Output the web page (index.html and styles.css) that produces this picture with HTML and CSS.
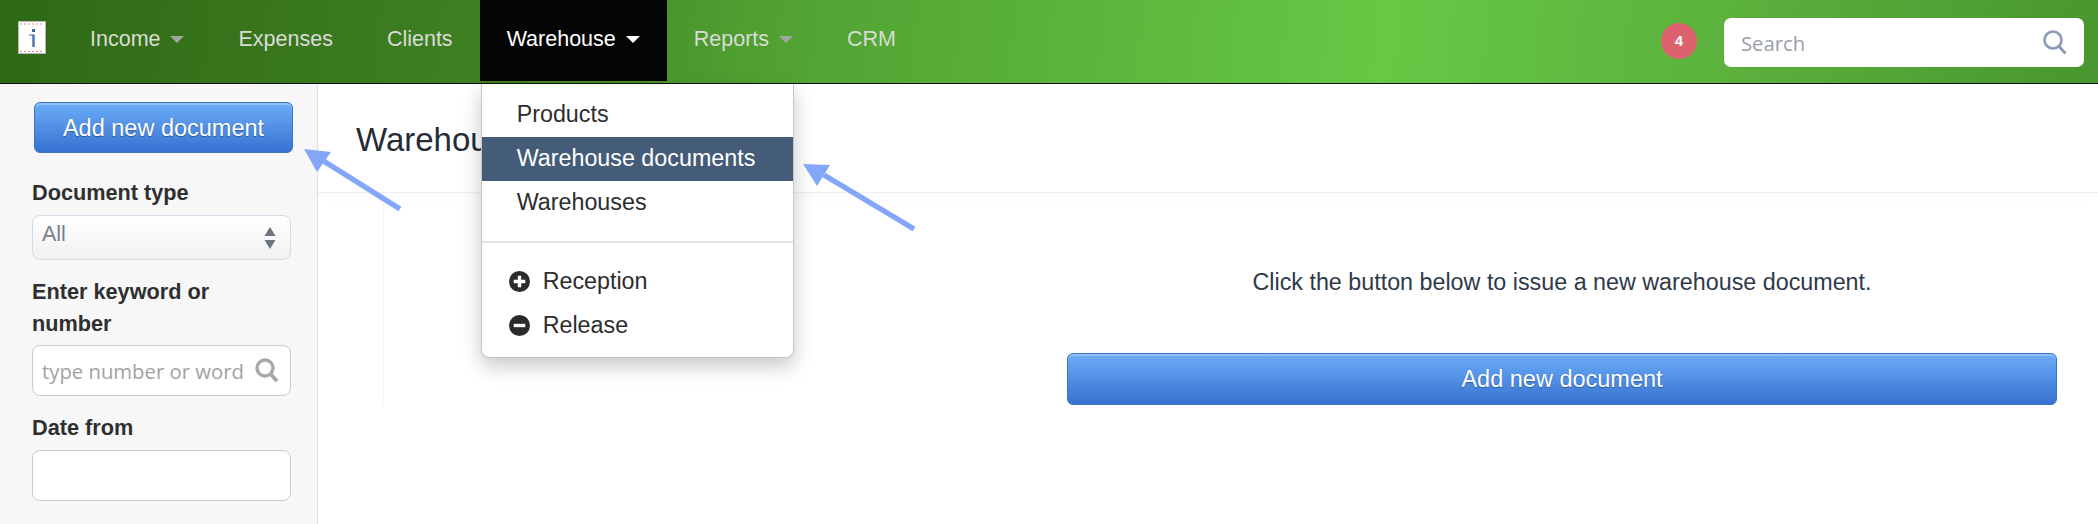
FILE: index.html
```html
<!DOCTYPE html>
<html lang="en">
<head>
    <meta charset="UTF-8">
    <title>Warehouse documents</title>
    <link rel="stylesheet" href="styles.css">
</head>
<body>
    <nav class="topbar">
        <a class="logo" href="#">
            <svg width="28" height="33" viewBox="0 0 28 33">
                <rect x="0.5" y="0.5" width="27" height="32" fill="#fff" stroke="#b9b9b9"/>
                <path d="M2 3H26M2 30.500H26" stroke="#d98a94" stroke-width="1.200" stroke-dasharray="2 2"/>
                <path d="M11 14H15.500" stroke="#7d9cc6" stroke-width="1.500"/>
                <path d="M15.500 13.500V26" stroke="#4f78ae" stroke-width="2.500"/>
                <rect x="14" y="8" width="3" height="3" fill="#3f6ca8"/>
            </svg>
        </a>
        <ul class="menu">
            <li class="menu-item"><a href="#">Income <span class="caret"></span></a></li>
            <li class="menu-item"><a href="#">Expenses</a></li>
            <li class="menu-item"><a href="#">Clients</a></li>
            <li class="menu-item open">
                <a href="#">Warehouse <span class="caret"></span></a>
                <div class="dropdown">
                    <a class="drop-link" href="#">Products</a>
                    <a class="drop-link active" href="#">Warehouse documents</a>
                    <a class="drop-link" href="#">Warehouses</a>
                    <div class="divider"></div>
                    <a class="drop-link with-icon" href="#">
                        <svg width="21" height="21" viewBox="0 0 20 20"><circle cx="10" cy="10" r="10" fill="#2b2b2b"/><path d="M10 4.500V15.500M4.500 10H15.500" stroke="#fff" stroke-width="3.200"/></svg>
                        Reception
                    </a>
                    <a class="drop-link with-icon" href="#">
                        <svg width="21" height="21" viewBox="0 0 20 20"><circle cx="10" cy="10" r="10" fill="#2b2b2b"/><path d="M4.500 10H15.500" stroke="#fff" stroke-width="3.200"/></svg>
                        Release
                    </a>
                </div>
            </li>
            <li class="menu-item"><a href="#">Reports <span class="caret"></span></a></li>
            <li class="menu-item"><a href="#">CRM</a></li>
        </ul>
        <span class="badge">4</span>
        <div class="top-search">
            <input type="text" placeholder="Search">
            <svg width="24" height="25" viewBox="0 0 24 25"><circle cx="10" cy="10" r="8.500" fill="none" stroke="#8a9ab8" stroke-width="2.600"/><path d="M16 16.500L22.500 23.500" stroke="#8a9ab8" stroke-width="2.800"/></svg>
        </div>
    </nav>

    <div class="layout">
        <aside class="sidebar">
            <a class="btn btn-side" href="#">Add new document</a>

            <label class="field-label first">Document type</label>
            <div class="fake-select">
                <span>All</span>
                <svg width="12" height="24" viewBox="0 0 12 24"><path d="M6 1L11.500 10H0.500ZM6 23L0.500 14H11.500Z" fill="#6d7480"/></svg>
            </div>

            <label class="field-label">Enter keyword or number</label>
            <div class="side-input">
                <input type="text" placeholder="type number or word">
                <svg width="24" height="25" viewBox="0 0 24 25"><circle cx="10" cy="10" r="8" fill="none" stroke="#a8a8a8" stroke-width="3.400"/><path d="M15.500 16L22 23" stroke="#a8a8a8" stroke-width="3.800"/></svg>
            </div>

            <label class="field-label date">Date from</label>
            <div class="side-input"><input type="text"></div>
        </aside>

        <main class="content">
            <header class="page-head">
                <h1>Warehouse documents</h1>
            </header>
            <section class="empty-pane">
                <p>Click the button below to issue a new warehouse document.</p>
                <a class="btn btn-wide" href="#">Add new document</a>
            </section>
        </main>
    </div>

    <!-- frecce sopra lo screenshot -->
    <svg class="arrows" width="2098" height="524" viewBox="0 0 2098 524">
        <path d="M400 209L322 160" stroke="#84a6f8" stroke-width="5.500"/>
        <path d="M304 149L331 152L317 172Z" fill="#84a6f8"/>
        <path d="M914 229L824 175" stroke="#84a6f8" stroke-width="5.500"/>
        <path d="M803 164L830 165L817 186Z" fill="#84a6f8"/>
    </svg>
</body>
</html>
```

FILE: styles.css
```css
body {
    margin: 0;
    height: 100vh;
    overflow: hidden;
    position: relative;
    font-family: "Liberation Sans", Arial, sans-serif;
    font-size: 23.300px;
    color: #2e3a4a;
    background-color: #fff;
}

a {
    text-decoration: none;
}

/* Barra in alto */
.topbar {
    display: flex;
    align-items: flex-start;
    height: 83px;
    border-bottom: 1px solid #111;
    background: linear-gradient(97deg, #2f6814 0%, #3f8023 23%, #50a031 36%, #66c845 66%, #5bb23c 82%, #48962f 100%);
}

.logo {
    display: block;
    margin: 21px 0 0 18px;
    height: 33px;
}

.menu {
    display: flex;
    list-style: none;
    margin: 0 0 0 17px;
    padding: 0;
    font-size: 21.500px;
}

.menu-item {
    position: relative;
    height: 81px;
}

.menu-item > a {
    display: block;
    padding: 27px 27px 0;
    height: 54px;
    color: #d9dcd6;
}

.menu-item.open {
    background-color: #050505;
}

.menu-item.open > a {
    color: #fff;
}

.caret {
    display: inline-block;
    width: 0;
    height: 0;
    margin-left: 4px;
    vertical-align: 3px;
    border-left: 7px solid transparent;
    border-right: 7px solid transparent;
    border-top: 7px solid #a3a69f;
}

.open .caret {
    border-top-color: #fff;
}

.dropdown {
    position: absolute;
    top: 84px;
    left: 1px;
    z-index: 10;
    width: 313px;
    height: 274px;
    box-sizing: border-box;
    padding-top: 9px;
    background-color: #fff;
    border-radius: 0 0 8px 8px;
    border: 1px solid #c6c6c6;
    border-top: none;
    box-shadow: 0 8px 20px rgba(0, 0, 0, 0.22);
    font-size: 23.300px;
}

.drop-link {
    display: block;
    height: 44px;
    line-height: 43px;
    padding-left: 35px;
    color: #2d2d2d;
}

.drop-link.active {
    background-color: #445c78;
    color: #fff;
}

.divider {
    height: 2px;
    margin: 16px 0;
    background-color: #e4e4e4;
}

.with-icon {
    display: flex;
    align-items: center;
    gap: 13px;
    padding-left: 27px;
}

.badge {
    width: 36px;
    height: 36px;
    margin: 23px 27px 0 auto;
    border-radius: 50%;
    background-color: #dc626d;
    color: #fff;
    font-size: 15px;
    font-weight: bold;
    line-height: 36px;
    text-align: center;
}

.top-search {
    display: flex;
    align-items: center;
    width: 360px;
    height: 49px;
    margin: 18px 14px 0 0;
    padding: 0 17px;
    box-sizing: border-box;
    background-color: #fff;
    border-radius: 7px;
}

.top-search input,
.side-input input {
    flex: 1;
    min-width: 0;
    padding: 0;
    border: none;
    outline: none;
    background: transparent;
    font-family: "Open Sans", sans-serif;
    font-size: 20.300px;
}

.top-search input::placeholder {
    color: #9a9ea8;
}

.side-input input::placeholder {
    color: #a2a2a2;
}

/* Colonna sinistra e contenuto */
.layout {
    display: flex;
    height: calc(100vh - 84px);
}

.sidebar {
    flex: 0 0 318px;
    min-width: 0;
    box-sizing: border-box;
    padding: 18px 24px 0 32px;
    background-color: #f7f7f7;
    border-right: 1px solid #dfe1ea;
}

.btn {
    display: block;
    box-sizing: border-box;
    text-align: center;
    color: #fff;
    border: 1px solid #3a74c4;
    border-radius: 6px;
    background: linear-gradient(#6cadf9, #3672d0);
    box-shadow: inset 0 2px 0 rgba(255, 255, 255, 0.25);
    text-shadow: 0 1px 1px rgba(0, 0, 0, 0.35);
    font-size: 23.500px;
}

.btn-side {
    width: 259px;
    height: 51px;
    line-height: 51px;
    margin-left: 2px;
}

.field-label {
    display: block;
    margin-top: 16px;
    margin-bottom: 5px;
    font-size: 21.700px;
    font-weight: bold;
    line-height: 32px;
    color: #2f2f2f;
}

.field-label.first {
    margin-top: 24px;
    margin-bottom: 6px;
}

.field-label.date {
    margin-bottom: 6px;
}

.fake-select {
    display: flex;
    align-items: center;
    justify-content: space-between;
    width: 259px;
    height: 45px;
    box-sizing: border-box;
    padding: 0 14px 0 9px;
    border: 1px solid #d4dbe8;
    border-radius: 8px;
    background: linear-gradient(#fff, #f1f1f1);
    color: #77808c;
    font-size: 21.500px;
}

.fake-select span {
    margin-top: -7px;
}

.side-input {
    display: flex;
    align-items: center;
    width: 259px;
    height: 51px;
    box-sizing: border-box;
    padding: 0 11px 0 9px;
    border: 1px solid #cacaca;
    border-radius: 8px;
    background-color: #fff;
}

.content {
    flex: 1;
    min-width: 0;
}

.page-head {
    height: 109px;
    box-sizing: border-box;
    padding: 34px 0 0 38px;
    border-bottom: 1px solid #efefef;
    box-shadow: 0 4px 12px rgba(0, 0, 0, 0.02);
}

.page-head h1 {
    margin: 0;
    font-size: 33px;
    font-weight: normal;
    line-height: 44px;
    white-space: nowrap;
    color: #252c38;
}

.empty-pane {
    height: 211px;
    margin: 0 41px 0 65px;
    padding-left: 683px;
    border-left: 1px solid #f5f5f5;
}

.empty-pane p {
    margin: 0;
    padding-top: 73px;
    text-align: center;
    line-height: 32px;
    color: #2e3a4a;
}

.btn-wide {
    height: 52px;
    line-height: 50px;
    margin-top: 55px;
}

.arrows {
    position: absolute;
    top: 0;
    left: 0;
    z-index: 20;
    pointer-events: none;
}
```
